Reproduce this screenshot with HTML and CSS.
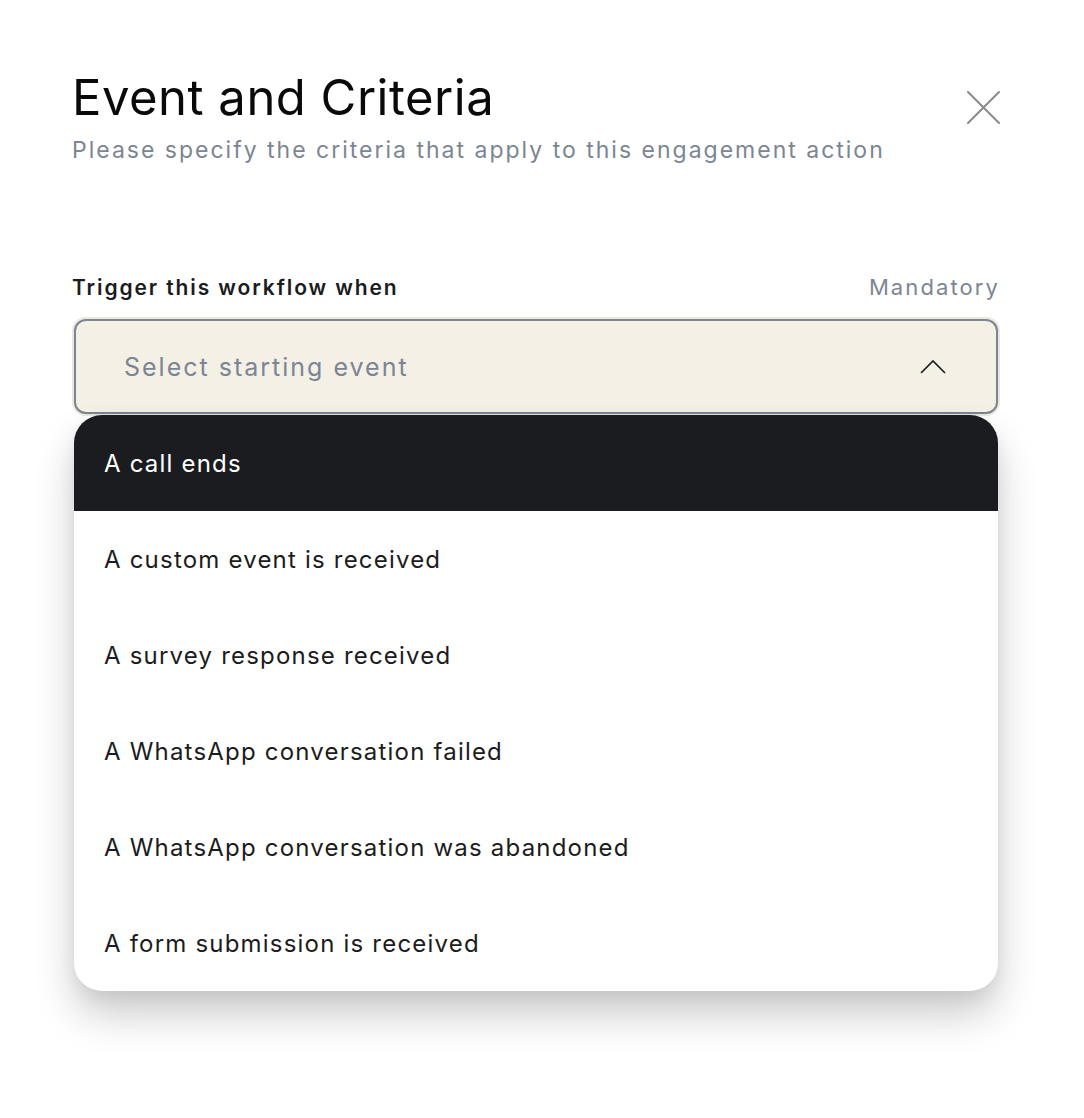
FILE: index.html
```html
<!DOCTYPE html>
<html>
<head>
<meta charset="utf-8">
<link rel="stylesheet" href="styles.css">
</head>
<body>
<div class="modal">
  <div class="header">
    <div class="titles">
      <h1 class="title">Event and Criteria</h1>
      <p class="subtitle">Please specify the criteria that apply to this engagement action</p>
    </div>
    <button class="close" aria-label="Close">
      <svg width="34" height="34" viewBox="0 0 34 34"><path d="M2 2 L33 33 M33 2 L2 33" stroke="#8a8a8a" stroke-width="2" fill="none" stroke-linecap="round"/></svg>
    </button>
  </div>
  <div class="field">
    <div class="label-row">
      <span class="label">Trigger this workflow when</span>
      <span class="mandatory">Mandatory</span>
    </div>
    <div class="select">
      <span class="placeholder">Select starting event</span>
      <svg class="chev" width="26" height="16" viewBox="0 0 26 16"><path d="M1 14 L13 2 L25 14" stroke="#1b1c20" stroke-width="1.6" fill="none"/></svg>
    </div>
    <ul class="menu">
      <li class="item active">A call ends</li>
      <li class="item">A custom event is received</li>
      <li class="item">A survey response received</li>
      <li class="item">A WhatsApp conversation failed</li>
      <li class="item">A WhatsApp conversation was abandoned</li>
      <li class="item">A form submission is received</li>
    </ul>
  </div>
</div>
</body>
</html>
```
FILE: styles.css
```css
* { box-sizing: border-box; }
html, body { margin: 0; padding: 0; background: #ffffff; }
body { font-family: Inter, "Noto Sans", sans-serif; color: #1b1c20; min-height: 1118px; }
.modal { width: 1084px; min-height: 1118px; padding: 68px 84px 128px 72px; }
.header { display: flex; justify-content: space-between; align-items: flex-start; }
.title { margin: 0; font-size: 49px; font-weight: 400; line-height: 60px; color: #0a0a0a; letter-spacing: 0.5px; }
.subtitle { margin: 8px 0 0 0; font-size: 23px; line-height: 28px; color: #7b8593; letter-spacing: 2px; }
.close { margin-top: 22px; padding: 0; border: 0; background: none; width: 34px; height: 34px; }
.close svg { display: block; }
.field { margin-top: 110px; }
.label-row { display: flex; justify-content: space-between; align-items: baseline; padding-right: 2px; }
.label { font-size: 21px; font-weight: 600; letter-spacing: 1.9px; color: #1b1c20; }
.mandatory { font-size: 22px; color: #7b8593; letter-spacing: 2.1px; margin-right: -2px; }
.select { margin: 19px 2px 0 2px; height: 95px; border: 2px solid #7b8593; border-radius: 12px; background: #f4f0e6; box-shadow: 0 0 0 2px #ece8dc; display: flex; align-items: center; justify-content: space-between; padding: 0 50px 0 48px; }
.placeholder { font-size: 25px; color: #7b8593; letter-spacing: 2px; }
.chev { display: block; }
.menu { list-style: none; margin: 1px 2px 0 2px; padding: 0; background: #ffffff; border-radius: 28px; overflow: hidden; box-shadow: 0 24px 40px rgba(0,0,0,0.2), 0 6px 16px rgba(0,0,0,0.06); }
.item { height: 96px; display: flex; align-items: center; padding-left: 30px; font-size: 24px; letter-spacing: 1.2px; color: #1b1c20; }
.item.active { background: #1b1c20; color: #ffffff; }
```
